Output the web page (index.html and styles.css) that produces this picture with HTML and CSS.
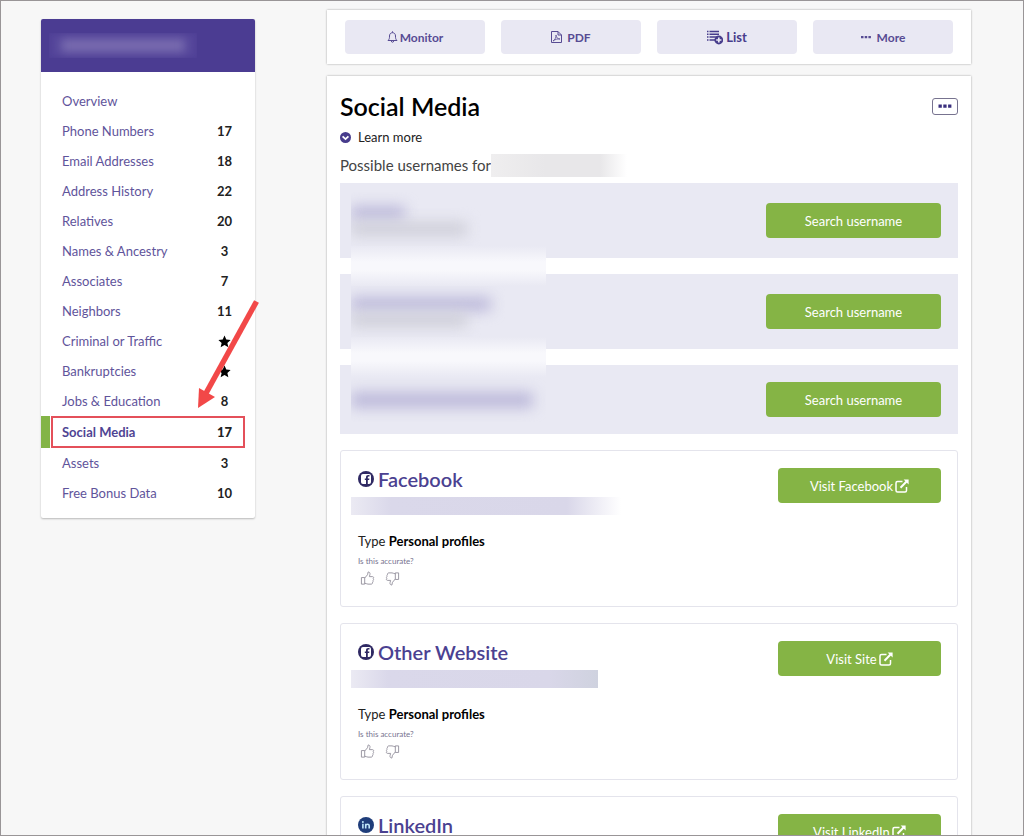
FILE: index.html
```html
<!DOCTYPE html>
<html lang="en">
<head>
    <meta charset="UTF-8">
    <meta name="viewport" content="width=device-width, initial-scale=1.0">
    <title>Social Media</title>
    <link rel="stylesheet" href="styles.css">
</head>
<body>
    <!-- Shared icons -->
    <svg class="sprite" aria-hidden="true">
        <symbol id="star" viewBox="0 0 24 24">
            <path fill="currentColor" d="M12 1l3.300 7.400 8 .8-6 5.400 1.800 8L12 18.400 4.900 22.600l1.800-8-6-5.400 8-.8z"/>
        </symbol>
        <symbol id="external" viewBox="0 0 14 14">
            <path fill="none" stroke="currentColor" stroke-width="1.500" d="M7.500 2.500H2.500a1.500 1.500 0 0 0-1.500 1.500v7.500A1.500 1.500 0 0 0 2.500 13H10a1.500 1.500 0 0 0 1.500-1.500V8"/>
            <path fill="none" stroke="currentColor" stroke-width="2" d="M5.500 8.700L11.500 2.500"/>
            <path fill="currentColor" d="M8.600.4h5v5z"/>
        </symbol>
        <symbol id="thumb" viewBox="0 0 16 16">
            <path fill="none" stroke="currentColor" stroke-width="1" stroke-linejoin="round" d="M1.500 7H5v7H1.500zM5 7.500L8 4l.7-3c1.600 0 2.200 1.300 1.900 2.700L10 6h3.300c1.300 0 1.600 1.400.8 2 .6.700.5 1.500-.2 2 .4.700.2 1.500-.5 1.900.2 1.200-.4 2.100-1.600 2.100H8.500C7 14 6.500 13 5 13"/>
        </symbol>
        <symbol id="fb" viewBox="0 0 16 16">
            <circle cx="8" cy="8" r="8" fill="#2f2963"/>
            <path fill="#fff" d="M5 3h6a2 2 0 0 1 2 2v6a2 2 0 0 1-2 2H5a2 2 0 0 1-2-2V5a2 2 0 0 1 2-2z"/>
            <path fill="#2f2963" d="M8 13V9H6.800V7.400H8V6.300c0-1.500.9-2.300 2.300-2.300h1.200v1.500h-.9c-.6 0-.8.3-.8.8v1.100h1.600L11.200 9H9.800v4z"/>
        </symbol>
        <symbol id="linkedin" viewBox="0 0 16 16">
            <circle cx="8" cy="8" r="8" fill="#1f3d7a"/>
            <circle cx="4.900" cy="5" r="1" fill="#bfe6fa"/>
            <path fill="none" stroke="#bfe6fa" stroke-width="1.600" d="M4.900 6.700V11.500M7.700 6.700V11.500M7.700 9c0-2.200 3.500-2.400 3.500 0v2.500"/>
        </symbol>
    </svg>

    <div class="page">
        <aside class="sidebar">
            <div class="sidebar-header"><span class="hidden-name"></span></div>
            <ul class="menu">
                <li><a href="#">Overview</a></li>
                <li><a href="#">Phone Numbers <b>17</b></a></li>
                <li><a href="#">Email Addresses <b>18</b></a></li>
                <li><a href="#">Address History <b>22</b></a></li>
                <li><a href="#">Relatives <b>20</b></a></li>
                <li><a href="#">Names &amp; Ancestry <b>3</b></a></li>
                <li><a href="#">Associates <b>7</b></a></li>
                <li><a href="#">Neighbors <b>11</b></a></li>
                <li><a href="#">Criminal or Traffic <b><svg class="star"><use href="#star"/></svg></b></a></li>
                <li><a href="#">Bankruptcies <b><svg class="star"><use href="#star"/></svg></b></a></li>
                <li><a href="#">Jobs &amp; Education <b>8</b></a></li>
                <li class="active"><a href="#">Social Media <b>17</b></a></li>
                <li><a href="#">Assets <b>3</b></a></li>
                <li><a href="#">Free Bonus Data <b>10</b></a></li>
            </ul>
            <svg class="arrow" viewBox="0 0 62 112" aria-hidden="true">
                <path d="M59.500 3.500L8 97" stroke="#f24848" stroke-width="5.500"/>
                <path d="M1 110L2 90l16 9z" fill="#f24848"/>
            </svg>
        </aside>

        <main class="content">
            <div class="toolbar">
                <button type="button">
                    <svg width="11" height="12" viewBox="0 0 11 12"><path fill="none" stroke="currentColor" d="M1 9.500C2.500 8 2.500 7 2.500 5c0-2 1.200-3.300 3-3.300s3 1.300 3 3.300c0 2 0 3 1.500 4.500zM5.500.3v1.400M4.300 10c.2 1.700 2.200 1.700 2.400 0"/></svg>
                    Monitor
                </button>
                <button type="button">
                    <svg width="11" height="12" viewBox="0 0 11 12"><path fill="none" stroke="currentColor" d="M.5.5H7L10.500 4v7.500H.5zM7 .5V4h3.500"/><path fill="none" stroke="currentColor" stroke-width=".8" d="M2 10c2-1 3.300-4 3-6 .3 2.500 1.500 4 4 4-2.500-.4-4.500.3-7 2"/></svg>
                    PDF
                </button>
                <button type="button" class="list-btn">
                    <svg width="16" height="15" viewBox="0 0 16 15"><path fill="none" stroke="currentColor" stroke-width="1.500" d="M0 1.500h1.500M2.500 1.500H12M0 4.300h1.500M2.500 4.300H12M0 7.100h1.500M2.500 7.100H12M0 9.900h1.500M2.500 9.900H8"/><circle cx="11.800" cy="10" r="4.400" fill="currentColor"/><path stroke="#e9e8f3" stroke-width="1.700" d="M11.800 7.400v5.200M9.200 10h5.200"/></svg>
                    List
                </button>
                <button type="button" class="more-btn">
                    <svg width="10" height="4" viewBox="0 0 10 4"><path fill="currentColor" d="M0 1h2.500v2.200H0zM3.700 1h2.500v2.200H3.700zM7.400 1h2.500v2.200H7.400z"/></svg>
                    More
                </button>
            </div>

            <section class="panel">
                <div class="panel-header">
                    <h1>Social Media</h1>
                    <button type="button" class="dots-btn" aria-label="Options">
                        <svg width="14" height="4" viewBox="0 0 14 4"><path fill="currentColor" d="M.5.500h3.300v3.200H.5zM5.300.5h3.300v3.200H5.300zM10.100.5h3.300v3.200h-3.300z"/></svg>
                    </button>
                </div>
                <a href="#" class="learn-more">
                    <svg width="11" height="11" viewBox="0 0 11 11"><circle cx="5.500" cy="5.500" r="5.500" fill="#473c8c"/><path fill="none" stroke="#fff" stroke-width="1.800" d="M2.600 4.300l2.900 2.800 2.900-2.800"/></svg>
                    Learn more
                </a>
                <p class="possible">Possible usernames for<span class="hidden-person"></span></p>

                <div class="usernames">
                    <div class="username">
                        <div class="hidden-user"><i class="line short"></i><i class="line gray"></i></div>
                        <button type="button" class="btn">Search username</button>
                    </div>
                    <div class="username">
                        <div class="hidden-user"><i class="line medium"></i><i class="line gray"></i></div>
                        <button type="button" class="btn">Search username</button>
                    </div>
                    <div class="username single">
                        <div class="hidden-user"><i class="line long"></i></div>
                        <button type="button" class="btn">Search username</button>
                    </div>
                </div>

                <article class="card">
                    <div class="card-info">
                        <h2><svg class="logo"><use href="#fb"/></svg>Facebook</h2>
                        <div class="hidden-link fade"></div>
                        <p class="type">Type <b>Personal profiles</b></p>
                        <p class="accurate">Is this accurate?</p>
                        <div class="votes">
                            <button type="button" aria-label="Yes"><svg><use href="#thumb"/></svg></button>
                            <button type="button" aria-label="No" class="down"><svg><use href="#thumb"/></svg></button>
                        </div>
                    </div>
                    <a href="#" class="btn visit">Visit Facebook<svg><use href="#external"/></svg></a>
                </article>

                <article class="card">
                    <div class="card-info">
                        <h2><svg class="logo"><use href="#fb"/></svg>Other Website</h2>
                        <div class="hidden-link"></div>
                        <p class="type">Type <b>Personal profiles</b></p>
                        <p class="accurate">Is this accurate?</p>
                        <div class="votes">
                            <button type="button" aria-label="Yes"><svg><use href="#thumb"/></svg></button>
                            <button type="button" aria-label="No" class="down"><svg><use href="#thumb"/></svg></button>
                        </div>
                    </div>
                    <a href="#" class="btn visit">Visit Site<svg><use href="#external"/></svg></a>
                </article>

                <article class="card">
                    <div class="card-info">
                        <h2><svg class="logo"><use href="#linkedin"/></svg>LinkedIn</h2>
                    </div>
                    <a href="#" class="btn visit">Visit LinkedIn<svg><use href="#external"/></svg></a>
                </article>
            </section>
        </main>
    </div>
</body>
</html>
```
FILE: styles.css
```css
* {
    margin: 0;
    padding: 0;
    box-sizing: border-box;
    font-family: Lato, "Open Sans", sans-serif;
}

body {
    height: 100vh;
    overflow: hidden;
    background-color: #f7f7f7;
    border: 1px solid #999597;
    font-size: 13px;
    color: #222;
}

a {
    color: inherit;
    text-decoration: none;
}

button {
    border: none;
    cursor: pointer;
}

.sprite {
    display: none;
}

.page {
    display: flex;
    align-items: flex-start;
    gap: 72px;
    padding: 9px 52px 0 40px;
}

/* Sidebar */
.sidebar {
    position: relative;
    width: 214px;
    flex-shrink: 0;
    margin-top: 9px;
    background-color: #fff;
    border-radius: 2px;
    box-shadow: 0 1px 2px rgba(0, 0, 0, 0.25);
}

.sidebar-header {
    height: 53px;
    padding: 14px 8px;
    background-color: #4b3c92;
    border-radius: 2px 2px 0 0;
}

.hidden-name {
    display: block;
    width: 148px;
    height: 25px;
    background-color: #54459a;
    box-shadow: inset 0 0 4px #4b3c92;
    overflow: hidden;
}

.hidden-name::before {
    content: "";
    display: block;
    height: 13px;
    margin: 6px 12px;
    background-color: #7a6db0;
    filter: blur(5px);
}

.menu {
    list-style: none;
    padding: 14px 0 10px;
}

.menu a {
    display: flex;
    justify-content: space-between;
    align-items: center;
    height: 30px;
    padding: 0 21px;
    color: #5f549b;
}

.menu b {
    min-width: 19px;
    text-align: center;
    color: #222;
}

.star {
    display: block;
    width: 13px;
    height: 13px;
    margin: 0 auto;
    color: #000;
}

.menu .active {
    padding: 0 10px 0 0;
    border-left: 9px solid #83b446;
}

.menu .active a {
    height: 32px;
    margin-left: 1px;
    padding: 0 9px;
    border: 2px solid #e4505a;
    font-weight: 700;
    color: #4f4493;
}

.arrow {
    position: absolute;
    left: 156px;
    top: 279px;
    width: 62px;
    height: 112px;
}

/* Toolbar */
.content {
    flex: 1;
    min-width: 0;
}

.toolbar {
    display: flex;
    gap: 16px;
    padding: 10px 18px;
    background-color: #fff;
    box-shadow: 0 0 2px rgba(0, 0, 0, 0.35);
}

.toolbar button {
    display: flex;
    flex: 1;
    justify-content: center;
    align-items: center;
    gap: 2px;
    height: 34px;
    background-color: #e9e8f3;
    border-radius: 4px;
    font-size: 12px;
    font-weight: 700;
    color: #574b93;
}

.toolbar button:nth-child(2) {
    gap: 5px;
}

.toolbar .list-btn {
    gap: 3px;
    font-size: 13px;
    color: #473c8c;
}

.toolbar .more-btn {
    gap: 6px;
}

/* Main panel */
.panel {
    margin-top: 12px;
    padding: 15px 13px;
    background-color: #fff;
    box-shadow: 0 0 2px rgba(0, 0, 0, 0.35);
}

.panel-header {
    display: flex;
    justify-content: space-between;
    align-items: center;
}

h1 {
    font-size: 25px;
    line-height: 30px;
    font-weight: 600;
    color: #000;
}

.dots-btn {
    display: flex;
    justify-content: center;
    align-items: center;
    width: 26px;
    height: 17px;
    background-color: #fff;
    border: 1px solid #77738f;
    border-radius: 3px;
    color: #3a2f7e;
}

.learn-more {
    display: flex;
    align-items: center;
    gap: 7px;
    margin-top: 6px;
    line-height: 20px;
}

.possible {
    display: flex;
    align-items: center;
    height: 24px;
    margin: 6px 0;
    font-size: 15px;
    color: #444;
}

.hidden-person {
    width: 136px;
    height: 23px;
    background: linear-gradient(to right, #efeeef, #e8e7e9 40%, #e8e7e9 80%, #fff);
}

.usernames {
    display: flex;
    flex-direction: column;
    gap: 16px;
}

.username {
    position: relative;
    display: flex;
    justify-content: space-between;
    align-items: center;
    height: 75px;
    padding: 0 17px 0 11px;
    background-color: #e9e9f3;
}

.username.single {
    height: 69px;
}

/* soft strip joining two neighbouring rows */
.username:not(.single)::after {
    content: "";
    position: absolute;
    z-index: 1;
    left: 11px;
    bottom: -28px;
    width: 195px;
    height: 40px;
    background: linear-gradient(#e9e9f3, #f8f8fc 40%, #f8f8fc 60%, #e9e9f3);
}

.hidden-user {
    width: 195px;
    padding: 12px 0;
    overflow: hidden;
}

.line {
    display: block;
    width: 116px;
    height: 14px;
    margin: 2px 0;
    background-color: #bcb9da;
    filter: blur(7px);
}

.line.short {
    width: 54px;
}

.line.medium {
    width: 140px;
}

.line.long {
    width: 182px;
    height: 16px;
}

.line.gray {
    background-color: #cfcfd9;
}

.btn {
    display: flex;
    justify-content: center;
    align-items: center;
    width: 175px;
    height: 35px;
    background-color: #85b445;
    border-radius: 4px;
    font-size: 13px;
    color: #fff;
}

/* Cards */
.card {
    display: flex;
    justify-content: space-between;
    align-items: flex-start;
    height: 157px;
    margin-top: 16px;
    padding: 17px 16px 0 17px;
    border: 1px solid #e4e4ec;
    border-radius: 3px;
}

.card h2 {
    display: flex;
    align-items: center;
    gap: 4px;
    font-size: 20px;
    line-height: 22px;
    font-weight: 600;
    color: #4b4191;
}

.logo {
    width: 16px;
    height: 16px;
}

.hidden-link {
    width: 247px;
    height: 18px;
    margin: 7px 0 0 -7px;
    background: linear-gradient(to right, #ebeaf3, #dad8ea 15%, #d9d7e9 80%, #cfd2df);
}

.hidden-link.fade {
    width: 270px;
    background: linear-gradient(to right, #ebeaf3, #dad8ea 15%, #d9d7e9 80%, #fff);
}

.type {
    margin-top: 17px;
    line-height: 18px;
}

.type b {
    color: #000;
}

.accurate {
    margin-top: 6px;
    font-size: 8px;
    line-height: 10px;
    color: #77738f;
}

.votes {
    display: flex;
    gap: 10px;
    padding: 5px 0 0 2px;
}

.votes button {
    width: 15px;
    height: 15px;
    background: none;
    color: #96939f;
}

.votes svg {
    display: block;
    width: 15px;
    height: 15px;
}

.votes .down {
    transform: rotate(180deg);
}

.visit {
    gap: 2px;
    width: 163px;
}

.visit svg {
    width: 14px;
    height: 14px;
}
```
